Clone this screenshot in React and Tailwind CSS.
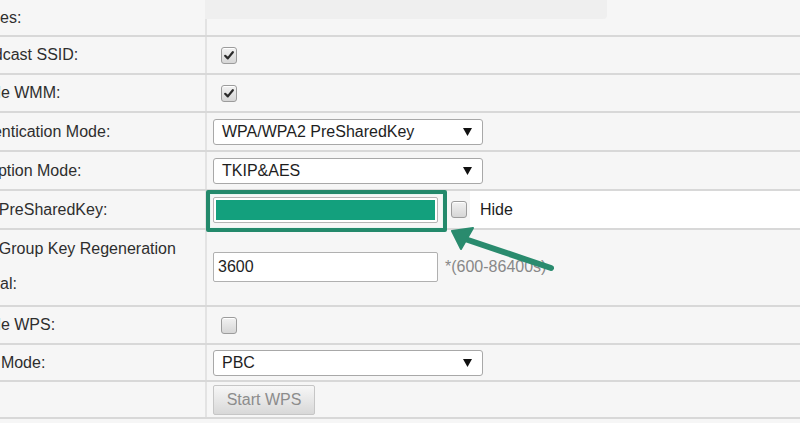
import React from "react";

function Check({ checked }) {
  return (
    <span className="flex h-[17px] w-[16px] items-center justify-center rounded-[3px] border border-[#9c9c9c] bg-gradient-to-b from-[#f2f2f2] to-[#d6d6d6] shadow-[inset_0_1px_0_#fff]">
      {checked && (
        <svg width="10" height="9" viewBox="0 0 10 9">
          <path d="M1.2 4.8 L3.8 7.4 L8.8 1.2" fill="none" stroke="#2a2a2a" strokeWidth="2.2" strokeLinecap="round" strokeLinejoin="round" />
        </svg>
      )}
    </span>
  );
}

function Select({ value }) {
  return (
    <div className="flex h-[26px] w-[270px] items-center justify-between rounded-[3px] border border-[#a8a8a8] bg-white pl-[8px] pr-[10px] text-[16px] text-[#1e1e1e]">
      <span>{value}</span>
      <svg width="9" height="8" viewBox="0 0 9 8">
        <path d="M0 0 H9 L4.5 8 Z" fill="#111" />
      </svg>
    </div>
  );
}

function Label({ children, shift = "ml-[-40px]" }) {
  return (
    <div className="flex w-[205px] shrink-0 items-center overflow-hidden">
      <span className={`${shift} whitespace-nowrap`}>{children}</span>
    </div>
  );
}

export default function App() {
  const rowBase = "flex border-b-2 border-[#d8d8d8]";
  const cell = "flex flex-1 items-center border-l-2 border-[#e3e3e3]";
  return (
    <div
      className="relative h-[423px] w-[800px] overflow-hidden bg-[#f6f6f6] text-[16px] text-[#2e2e2e]"
      style={{ fontFamily: '"Liberation Sans", Arial, sans-serif' }}
    >
      {/* row 0 */}
      <div className={`${rowBase} h-[37px]`}>
        <Label>Devices:</Label>
        <div className="flex flex-1 flex-col">
          <div className="h-[19px] w-[402px] shrink-0 rounded-br-[4px] bg-[#efefef]" />
          <div className="flex-1 border-l-2 border-[#e3e3e3]" />
        </div>
      </div>
      {/* row 1 */}
      <div className={`${rowBase} h-[38px]`}>
        <Label>Broadcast SSID:</Label>
        <div className={`${cell} pl-[14px]`}>
          <Check checked />
        </div>
      </div>
      {/* row 2 */}
      <div className={`${rowBase} h-[38px]`}>
        <Label>Enable WMM:</Label>
        <div className={`${cell} pl-[14px]`}>
          <Check checked />
        </div>
      </div>
      {/* row 3 */}
      <div className={`${rowBase} h-[39px]`}>
        <Label>Authentication Mode:</Label>
        <div className={`${cell} pl-[6px]`}>
          <Select value="WPA/WPA2 PreSharedKey" />
        </div>
      </div>
      {/* row 4 */}
      <div className={`${rowBase} h-[39px]`}>
        <Label shift="ml-[-43px]">Encryption Mode:</Label>
        <div className={`${cell} pl-[6px]`}>
          <Select value="TKIP&AES" />
        </div>
      </div>
      {/* row 5 */}
      <div className={`${rowBase} h-[39px]`}>
        <Label>WPA PreSharedKey:</Label>
        <div className={`${cell} pl-[6px]`}>
          <div className="relative h-[26px] w-[225px] shrink-0 rounded-[2px] border border-[#b5b5b5] bg-white p-[2px]">
            <div className="h-full w-full bg-[#13a07d]" />
            <div className="absolute -bottom-[10px] -left-[8px] -right-[10px] -top-[8px] rounded-[2px] border-[4px] border-[#23896b] shadow-[inset_0_0_0_1px_#e9f6f2]" />
          </div>
          <div className="ml-[13px] flex items-center">
            <Check />
          </div>
          <div className="ml-[3px] flex h-full flex-1 items-center bg-white pl-[10px] text-[#1e1e1e]">
            Hide
          </div>
        </div>
      </div>
      {/* row 6 */}
      <div className={`${rowBase} h-[77px]`}>
        <div className="flex w-[205px] shrink-0 items-center overflow-hidden pb-[4px]">
          <div className="ml-[-40px] w-[245px] leading-[35px]">
            WPA Group Key Regeneration Interval:
          </div>
        </div>
        <div className={`${cell} pl-[6px] pb-[2px]`}>
          <div className="flex h-[30px] w-[225px] items-center rounded-[2px] border border-[#b0b0b0] bg-white pl-[4px] text-[#1e1e1e]">
            3600
          </div>
          <span className="ml-[7px] text-[#888]">*(600-86400s)</span>
        </div>
      </div>
      {/* row 7 */}
      <div className={`${rowBase} h-[38px]`}>
        <Label>Enable WPS:</Label>
        <div className={`${cell} pl-[14px]`}>
          <Check />
        </div>
      </div>
      {/* row 8 */}
      <div className={`${rowBase} h-[37px]`}>
        <Label>WPS Mode:</Label>
        <div className={`${cell} pl-[6px]`}>
          <Select value="PBC" />
        </div>
      </div>
      {/* row 9 */}
      <div className={`${rowBase} h-[37px]`}>
        <Label></Label>
        <div className={`${cell} pl-[6px]`}>
          <div className="flex h-[30px] w-[102px] items-center justify-center rounded-[2px] border border-[#c6c6c6] bg-gradient-to-b from-[#f7f7f7] to-[#d8d8d8] text-[#8c8c8c]">
            Start WPS
          </div>
        </div>
      </div>

      {/* annotation arrow */}
      <svg className="pointer-events-none absolute left-0 top-0" width="800" height="423" viewBox="0 0 800 423">
        <line x1="465" y1="239" x2="551" y2="268" stroke="#2a8b6e" strokeWidth="6" strokeLinecap="round" />
        <path d="M452 231 L473 228 L461 249 Z" fill="#2a8b6e" stroke="#2a8b6e" strokeWidth="2" strokeLinejoin="round" />
      </svg>
    </div>
  );
}
